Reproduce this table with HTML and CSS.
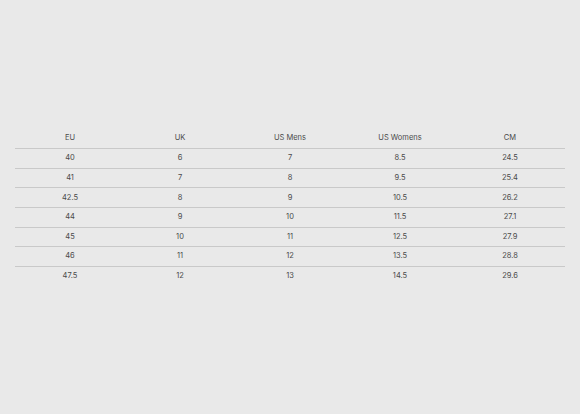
FILE: index.html
```html
<!DOCTYPE html>
<html>
<head>
<meta charset="utf-8">
<link rel="stylesheet" href="styles.css">
</head>
<body>
<div class="page">
  <table class="sizes">
    <thead>
      <tr><th>EU</th><th>UK</th><th>US Mens</th><th>US Womens</th><th>CM</th></tr>
    </thead>
    <tbody>
      <tr><td>40</td><td>6</td><td>7</td><td>8.5</td><td>24.5</td></tr>
      <tr><td>41</td><td>7</td><td>8</td><td>9.5</td><td>25.4</td></tr>
      <tr><td>42.5</td><td>8</td><td>9</td><td>10.5</td><td>26.2</td></tr>
      <tr><td>44</td><td>9</td><td>10</td><td>11.5</td><td>27.1</td></tr>
      <tr><td>45</td><td>10</td><td>11</td><td>12.5</td><td>27.9</td></tr>
      <tr><td>46</td><td>11</td><td>12</td><td>13.5</td><td>28.8</td></tr>
      <tr><td>47.5</td><td>12</td><td>13</td><td>14.5</td><td>29.6</td></tr>
    </tbody>
  </table>
</div>
</body>
</html>
```
FILE: styles.css
```css
html, body {
  margin: 0;
  padding: 0;
  background: #e9e9e9;
}
.page {
  height: 414px;
  display: flex;
  align-items: center;
  justify-content: center;
  padding: 0 15px;
  box-sizing: border-box;
}
.sizes {
  width: 550px;
  border-collapse: collapse;
  table-layout: fixed;
  font-family: Inter, "Liberation Sans", sans-serif;
  font-size: 7.5px;
  color: #4a4a4a;
}
.sizes th, .sizes td {
  text-align: center;
  font-weight: 400;
  padding: 0 0 1px;
  vertical-align: middle;
}
.sizes th {
  height: 18.5px;
  border-bottom: 1px solid #c9c9c9;
}
.sizes td {
  height: 17.6px;
  border-bottom: 1px solid #c9c9c9;
}
.sizes tbody tr:last-child td {
  border-bottom: none;
}
```
